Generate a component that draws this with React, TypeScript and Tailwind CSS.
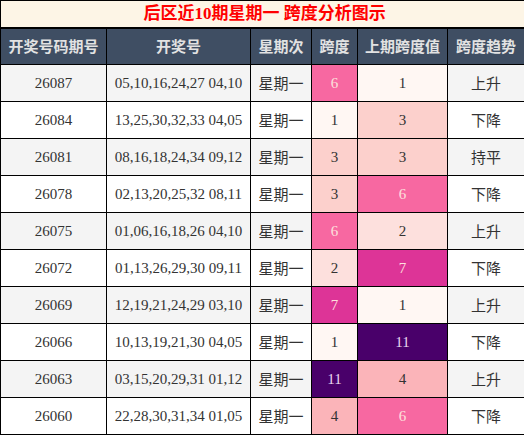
import React from "react";

interface Row {
  issue: string;
  nums: string;
  span: number;
  prev: number;
  trend: string;
}

const rows: Row[] = [
  { issue: "26087", nums: "05,10,16,24,27 04,10", span: 6, prev: 1, trend: "上升" },
  { issue: "26084", nums: "13,25,30,32,33 04,05", span: 1, prev: 3, trend: "下降" },
  { issue: "26081", nums: "08,16,18,24,34 09,12", span: 3, prev: 3, trend: "持平" },
  { issue: "26078", nums: "02,13,20,25,32 08,11", span: 3, prev: 6, trend: "下降" },
  { issue: "26075", nums: "01,06,16,18,26 04,10", span: 6, prev: 2, trend: "上升" },
  { issue: "26072", nums: "01,13,26,29,30 09,11", span: 2, prev: 7, trend: "下降" },
  { issue: "26069", nums: "12,19,21,24,29 03,10", span: 7, prev: 1, trend: "上升" },
  { issue: "26066", nums: "10,13,19,21,30 04,05", span: 1, prev: 11, trend: "下降" },
  { issue: "26063", nums: "03,15,20,29,31 01,12", span: 11, prev: 4, trend: "上升" },
  { issue: "26060", nums: "22,28,30,31,34 01,05", span: 4, prev: 6, trend: "下降" },
];

// heat colours for span values
const heat: Record<number, string> = {
  1: "bg-[#fff7f3] text-[#333]",
  2: "bg-[#fde0dd] text-[#333]",
  3: "bg-[#fcd0cc] text-[#333]",
  4: "bg-[#fbb4b9] text-[#333]",
  6: "bg-[#f768a1] text-[#fde0dd]",
  7: "bg-[#dd3497] text-[#fde0dd]",
  11: "bg-[#49006a] text-[#e8d8ee]",
};

const cjk = "font-['Noto_Sans_CJK_SC',sans-serif]";
const serif = "font-['Liberation_Serif','Noto_Sans_CJK_SC',serif]";

const App: React.FC = () => {
  return (
    <div className="w-[524px] h-[435px] bg-white">
      <table className="w-[524px] table-fixed border-collapse">
        <colgroup>
          <col className="w-[106px]" />
          <col className="w-[144px]" />
          <col className="w-[61px]" />
          <col className="w-[46px]" />
          <col className="w-[90px]" />
          <col className="w-[77px]" />
        </colgroup>
        <thead>
          {/* Title */}
          <tr className="h-[27px]">
            <th
              colSpan={6}
              className={`bg-[#fdf5e6] border border-black border-b-2 text-[#ff0000] text-[17px] font-bold leading-none pl-[4px] ${serif}`}
            >
              后区近10期星期一 跨度分析图示
            </th>
          </tr>
          {/* Header */}
          <tr className={`h-[37px] bg-[#3f4e63] text-[#e2e2e2] text-[15px] font-bold ${cjk}`}>
            <th className="border border-black">开奖号码期号</th>
            <th className="border border-black">开奖号</th>
            <th className="border border-black">星期次</th>
            <th className="border border-black">跨度</th>
            <th className="border border-black">上期跨度值</th>
            <th className="border border-black">跨度趋势</th>
          </tr>
        </thead>
        <tbody>
          {rows.map((r, i) => (
            <tr key={r.issue} className={`h-[37px] text-[15px] text-[#333] ${i % 2 === 0 ? "bg-[#f4f4f4]" : "bg-white"}`}>
              <td className={`border border-black text-center ${serif}`}>{r.issue}</td>
              <td className={`border border-black text-center ${serif}`}>{r.nums}</td>
              <td className={`border border-black text-center ${cjk}`}>星期一</td>
              <td className={`border border-black text-center ${serif} ${heat[r.span]}`}>{r.span}</td>
              <td className={`border border-black text-center ${serif} ${heat[r.prev]}`}>{r.prev}</td>
              <td className={`border border-black text-center ${cjk}`}>{r.trend}</td>
            </tr>
          ))}
        </tbody>
      </table>
    </div>
  );
};

export default App;
